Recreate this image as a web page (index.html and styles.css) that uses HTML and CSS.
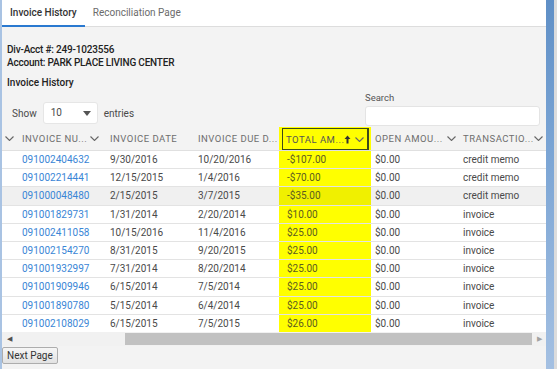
FILE: index.html
```html
<!DOCTYPE html>
<html lang="en">
<head>
  <meta charset="UTF-8">
  <title>Invoice History</title>
  <link rel="stylesheet" href="styles.css">
</head>
<body>
  <div class="edge-left"></div>
  <div class="main">
    <div class="tabs">
      <a class="tab active">Invoice History</a>
      <a class="tab">Reconciliation Page</a>
    </div>
    <div class="content">
      <div class="acct">
        <div>Div-Acct #: 249-1023556</div>
        <div>Account: PARK PLACE LIVING CENTER</div>
      </div>
      <div class="section-title">Invoice History</div>
      <div class="controls">
        <div class="show">
          <span>Show</span>
          <div class="select"><span>10</span><span class="caret"></span></div>
          <span>entries</span>
        </div>
        <div class="search">
          <label>Search</label>
          <div class="search-box"></div>
        </div>
      </div>

      <table class="grid">
        <colgroup>
          <col class="c0"><col class="c1"><col class="c2"><col class="c3"><col class="c4"><col class="c5"><col class="c6">
        </colgroup>
        <thead>
          <tr>
            <th class="stub"><svg class="chev" width="9" height="5" viewBox="0 0 9 5"><polyline points="0.5,0.5 4.5,4.5 8.5,0.5"/></svg></th>
            <th><span class="label">INVOICE NU...</span><svg class="chev" width="9" height="5" viewBox="0 0 9 5"><polyline points="0.5,0.5 4.5,4.5 8.5,0.5"/></svg></th>
            <th><span class="label">INVOICE DATE</span></th>
            <th><span class="label">INVOICE DUE D...</span></th>
            <th class="hl sorted">
              <div class="sort-box">
                <span class="label">TOTAL AM...</span>
                <svg class="arrow" width="7" height="9" viewBox="0 0 7 9"><path d="M3.5 0.5 L6.5 4 H4.5 V8.5 H2.5 V4 H0.5 Z"/></svg>
                <svg class="chev" width="9" height="5" viewBox="0 0 9 5"><polyline points="0.5,0.5 4.5,4.5 8.5,0.5"/></svg>
              </div>
            </th>
            <th class="tight"><span class="label">OPEN AMOU...</span><svg class="chev" width="9" height="5" viewBox="0 0 9 5"><polyline points="0.5,0.5 4.5,4.5 8.5,0.5"/></svg></th>
            <th class="tight"><span class="label">TRANSACTIO...</span><svg class="chev" width="9" height="5" viewBox="0 0 9 5"><polyline points="0.5,0.5 4.5,4.5 8.5,0.5"/></svg></th>
          </tr>
        </thead>
        <tbody id="rows"></tbody>
      </table>

      <div class="hscroll">
        <div class="arrow-btn">&#9664;</div>
        <div class="track"><div class="thumb"></div></div>
        <div class="arrow-btn right">&#9654;</div>
      </div>

      <div class="footer">
        <button class="next">Next Page</button>
      </div>
    </div>
  </div>
  <div class="edge-right"></div>

  <script>
    // invoice rows: number, date, due date, total, open, type
    const invoices = [
      ['091002404632', '9/30/2016', '10/20/2016', '-$107.00', '$0.00', 'credit memo'],
      ['091002214441', '12/15/2015', '1/4/2016', '-$70.00', '$0.00', 'credit memo'],
      ['091000048480', '2/15/2015', '3/7/2015', '-$35.00', '$0.00', 'credit memo'],
      ['091001829731', '1/31/2014', '2/20/2014', '$10.00', '$0.00', 'invoice'],
      ['091002411058', '10/15/2016', '11/4/2016', '$25.00', '$0.00', 'invoice'],
      ['091002154270', '8/31/2015', '9/20/2015', '$25.00', '$0.00', 'invoice'],
      ['091001932997', '7/31/2014', '8/20/2014', '$25.00', '$0.00', 'invoice'],
      ['091001909946', '6/15/2014', '7/5/2014', '$25.00', '$0.00', 'invoice'],
      ['091001890780', '5/15/2014', '6/4/2014', '$25.00', '$0.00', 'invoice'],
      ['091002108029', '6/15/2015', '7/5/2015', '$26.00', '$0.00', 'invoice']
    ];

    let tbody = document.getElementById('rows');
    invoices.forEach(function (r, i) {
      let tr = document.createElement('tr');
      if (i === 2) tr.className = 'hover';
      tr.innerHTML =
        '<td class="stub"></td>' +
        '<td><a class="link">' + r[0] + '</a></td>' +
        '<td>' + r[1] + '</td>' +
        '<td>' + r[2] + '</td>' +
        '<td class="hl">' + r[3] + '</td>' +
        '<td class="tight">' + r[4] + '</td>' +
        '<td class="tight">' + r[5] + '</td>';
      tbody.appendChild(tr);
    });
  </script>
</body>
</html>
```

FILE: styles.css
```css
html, body {
  margin: 0;
  height: 100%;
}
body {
  display: flex;
  font-family: Roboto, Arial, sans-serif;
  font-size: 10px;
  color: #4a4a4a;
  background: #f3f3f3;
  overflow: hidden;
}
.edge-left {
  width: 2px;
  background: #a9c3e3;
}
.edge-right {
  width: 8px;
  background: linear-gradient(180deg, #5f8fc6 0%, #7aa4d4 40%, #a4c0e2 100%);
  border-right: 3px solid #dcdcdc;
}
.main {
  flex: 1;
  display: flex;
  flex-direction: column;
  min-width: 0;
}

/* tabs */
.tabs {
  display: flex;
  height: 26px;
  background: #fff;
  border-bottom: 1px solid #dddddd;
}
.tab {
  display: flex;
  align-items: center;
  padding: 0 8px;
  font-size: 10px;
  color: #6b6b6b;
  border-bottom: 2px solid transparent;
  margin-bottom: -1px;
}
.tab.active {
  color: #333;
  font-weight: 500;
  border-bottom-color: #2a79d0;
}
.content {
  margin-top: 10px;
  background: #f3f3f3;
  flex: 1;
  display: flex;
  flex-direction: column;
}

.acct {
  padding: 6px 0 0 5px;
  font-weight: 500;
  line-height: 13px;
  letter-spacing: -0.2px;
  color: #222;
}
.section-title {
  padding: 7px 0 0 5px;
  font-weight: 500;
  color: #222;
  line-height: 13px;
}

/* show / search */
.controls {
  display: flex;
  justify-content: space-between;
  align-items: flex-end;
  height: 38px;
}
.show {
  display: flex;
  align-items: center;
  gap: 6px;
  padding-left: 10px;
  margin-bottom: 3px;
  font-size: 10px;
}
.select {
  width: 55px;
  height: 22px;
  background: #fff;
  border: 1px solid #e6e6e6;
  border-radius: 3px;
  box-sizing: border-box;
  display: flex;
  align-items: center;
  justify-content: space-between;
  padding: 0 6px 2px 7px;
}
.caret {
  width: 0;
  height: 0;
  border-left: 4px solid transparent;
  border-right: 4px solid transparent;
  border-top: 5px solid #555;
  margin-top: 2px;
}
.search {
  display: flex;
  flex-direction: column;
  width: 175px;
  margin-right: 6px;
  margin-bottom: 1px;
}
.search label {
  font-size: 9.5px;
  color: #555;
  line-height: 13px;
  margin-bottom: 2px;
}
.search-box {
  height: 18px;
  background: #fff;
  border: 1px solid #e4e4e4;
  border-radius: 3px;
}

/* table */
.grid {
  border-collapse: collapse;
  table-layout: fixed;
  width: 544px;
}
.c0 { width: 12px; }
.c1 { width: 88px; }
.c2 { width: 88px; }
.c3 { width: 89px; }
.c4 { width: 92px; }
.c5 { width: 88px; }
.c6 { width: 87px; }

.grid th {
  height: 23px;
  box-sizing: border-box;
  padding: 0 0 0 8px;
  text-align: left;
  font-weight: normal;
  font-size: 9.5px;
  letter-spacing: 0.5px;
  color: #6e6e6e;
  white-space: nowrap;
  overflow: hidden;
  border-bottom: 1px solid #e0e0e0;
  position: relative;
}
.grid th.stub {
  padding: 0;
}
.grid .tight {
  padding-left: 4px;
}
.chev {
  position: absolute;
  right: 3px;
  top: 9px;
  fill: none;
  stroke: #666;
  stroke-width: 1.1;
}
.grid th.stub .chev {
  right: auto;
  left: 3px;
}
.grid th.sorted {
  padding: 1px 2px 0 3px;
}
.sort-box {
  height: 20px;
  border: 1px solid #3d4a1a;
  border-width: 1px 2px 1px 1px;
  display: flex;
  align-items: center;
  padding-left: 3px;
  position: relative;
  color: #555;
}
.sort-box .arrow {
  position: absolute;
  right: 16px;
  top: 6px;
  fill: #333;
}
.sort-box .chev {
  right: 3px;
  top: 8px;
}

.grid td {
  height: 17.2px;
  padding: 0 0 0 8px;
  border-top: 1px solid #e3e3e3;
  background: #fff;
  font-size: 10px;
  white-space: nowrap;
  overflow: hidden;
  color: #4a4a4a;
}
.grid td.stub {
  padding: 0;
}
.grid .hl {
  background: #ffff00;
}
.grid td.hl {
  color: #5c5c20;
}
.grid tr.hover td {
  background: #f0f0f0;
}
.grid tr.hover td.hl {
  background: #f0f000;
}
.link {
  color: #3a86d6;
}

/* horizontal scrollbar */
.hscroll {
  display: flex;
  height: 14px;
  background: #f1f1f1;
  width: 544px;
}
.arrow-btn {
  width: 14px;
  font-size: 7px;
  color: #505050;
  display: flex;
  align-items: center;
  justify-content: center;
}
.arrow-btn.right {
  color: #a3a3a3;
}
.track {
  flex: 1;
  padding: 1px 0;
}
.thumb {
  margin-left: 109px;
  height: 12px;
  background: #c1c1c1;
}

.footer {
  padding: 1px 0 0 0;
}
.next {
  margin: 0;
  font-family: Roboto, Arial, sans-serif;
  font-size: 10px;
  color: #333;
  padding: 0 4px;
  height: 17px;
  background: linear-gradient(#f6f6f6, #e2e2e2);
  border: 1px solid #adadad;
  border-radius: 2px;
}
```
